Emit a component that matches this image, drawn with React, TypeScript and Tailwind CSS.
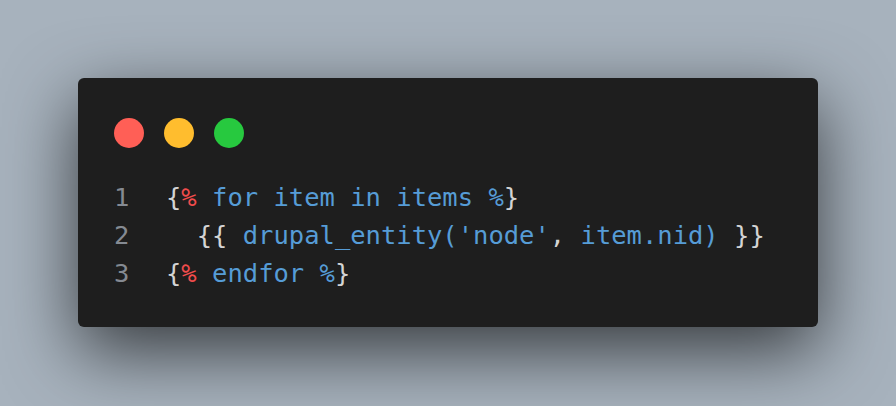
const lines: { n: number; parts: [string, string][] }[] = [
  {
    n: 1,
    parts: [
      ["{", "text-[#d4d4d4]"],
      ["%", "text-[#f14c4c]"],
      [" for item in items %", "text-[#569cd6]"],
      ["}", "text-[#d4d4d4]"],
    ],
  },
  {
    n: 2,
    parts: [
      ["  {{ ", "text-[#d4d4d4]"],
      ["drupal_entity('node'", "text-[#569cd6]"],
      [", ", "text-[#d4d4d4]"],
      ["item.nid)", "text-[#569cd6]"],
      [" }}", "text-[#d4d4d4]"],
    ],
  },
  {
    n: 3,
    parts: [
      ["{", "text-[#d4d4d4]"],
      ["%", "text-[#f14c4c]"],
      [" endfor %", "text-[#569cd6]"],
      ["}", "text-[#d4d4d4]"],
    ],
  },
];

export default function App() {
  return (
    <div className="w-[896px] h-[406px] bg-[#a7b2bd] pt-[78px] pl-[78px]">
      <div className="w-[740px] h-[249px] rounded-md bg-[#1e1e1e] pt-10 px-9 shadow-[0_24px_72px_rgba(0,0,0,0.68)]">
        <div className="flex gap-5">
          <span className="w-[30px] h-[30px] rounded-full bg-[#ff5f56]" />
          <span className="w-[30px] h-[30px] rounded-full bg-[#ffbd2e]" />
          <span className="w-[30px] h-[30px] rounded-full bg-[#27c93f]" />
        </div>
        <div className="mt-[30px] font-['DejaVu_Sans_Mono',monospace] text-[25.5px] leading-[38px] whitespace-pre">
          {lines.map((l) => (
            <div key={l.n} className="flex">
              <span className="w-[52px] text-[#858a92]">{l.n}</span>
              <span>
                {l.parts.map(([t, c], i) => (
                  <span key={i} className={c}>
                    {t}
                  </span>
                ))}
              </span>
            </div>
          ))}
        </div>
      </div>
    </div>
  );
}
